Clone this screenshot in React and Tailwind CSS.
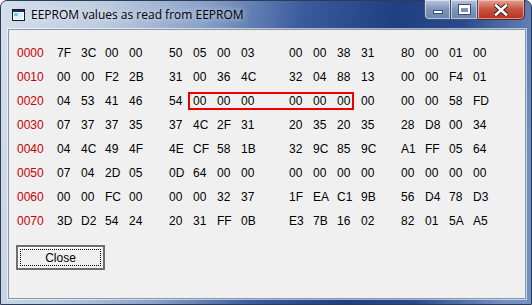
import React from 'react';

const rows = [
    ['0000', ['7F', '3C', '00', '00'], ['50', '05', '00', '03'], ['00', '00', '38', '31'], ['80', '00', '01', '00']],
    ['0010', ['00', '00', 'F2', '2B'], ['31', '00', '36', '4C'], ['32', '04', '88', '13'], ['00', '00', 'F4', '01']],
    ['0020', ['04', '53', '41', '46'], ['54', '00', '00', '00'], ['00', '00', '00', '00'], ['00', '00', '58', 'FD']],
    ['0030', ['07', '37', '37', '35'], ['37', '4C', '2F', '31'], ['20', '35', '20', '35'], ['28', 'D8', '00', '34']],
    ['0040', ['04', '4C', '49', '4F'], ['4E', 'CF', '58', '1B'], ['32', '9C', '85', '9C'], ['A1', 'FF', '05', '64']],
    ['0050', ['07', '04', '2D', '05'], ['0D', '64', '00', '00'], ['00', '00', '00', '00'], ['00', '00', '00', '00']],
    ['0060', ['00', '00', 'FC', '00'], ['00', '00', '32', '37'], ['1F', 'EA', 'C1', '9B'], ['56', 'D4', '78', 'D3']],
    ['0070', ['3D', 'D2', '54', '24'], ['20', '31', 'FF', '0B'], ['E3', '7B', '16', '02'], ['82', '01', '5A', 'A5']],
];

function Group({ bytes, className }) {
    return (
        <div className={`flex ${className}`}>
            {bytes.map((b, i) => (
                <span key={i} className="w-[24px]">{b}</span>
            ))}
        </div>
    );
}

function TitleButtons() {
    return (
        <div className="flex h-[20px] mt-[-1px]">
            <div className="w-[27px] flex items-center justify-center rounded-bl-[5px] border border-t-0 border-[#3b4f73] bg-gradient-to-b from-[#b8c6dd] via-[#7d93b9] to-[#6c86b3] shadow-[inset_0_0_0_1px_rgba(255,255,255,0.5)]">
                <div className="w-[10px] h-[4px] mt-[5px] bg-white border border-[#3d4f70]" />
            </div>
            <div className="w-[27px] flex items-center justify-center border border-l-0 border-t-0 border-[#3b4f73] bg-gradient-to-b from-[#b8c6dd] via-[#7d93b9] to-[#6c86b3] shadow-[inset_0_0_0_1px_rgba(255,255,255,0.5)]">
                <div className="w-[11px] h-[9px] border-[2px] border-t-[3px] border-white outline outline-1 outline-[#3d4f70]" />
            </div>
            <div className="w-[47px] flex items-center justify-center rounded-br-[5px] border border-l-0 border-t-0 border-[#4a2a2a] bg-gradient-to-b from-[#e3a394] via-[#c8503e] to-[#b8301e] shadow-[inset_0_0_0_1px_rgba(255,210,200,0.6)]">
                <svg width="14" height="12" viewBox="0 0 14 12">
                    <path d="M2 1.5 L12 10.5 M12 1.5 L2 10.5" stroke="#3a2020" strokeWidth="4.5" strokeLinecap="square" />
                    <path d="M2 1.5 L12 10.5 M12 1.5 L2 10.5" stroke="#ffffff" strokeWidth="2.6" strokeLinecap="square" />
                </svg>
            </div>
        </div>
    );
}

export default function App() {
    return (
        <div className="w-[532px] h-[305px] bg-white">
            <div className="w-[532px] h-[305px] rounded-t-[7px] border border-[#2c3c58] bg-[linear-gradient(100deg,#d5dfec_0%,#bccbe0_18%,#8aa2c8_35%,#3b5c9c_52%,#1f3f80_68%,#2a4a8c_80%,#7390c2_95%)] flex flex-col">
                {/* Title bar */}
                <div className="h-[28px] flex items-start">
                    <div className="flex items-center h-[28px] pl-[11px]">
                        <svg width="13" height="12" viewBox="0 0 13 12">
                            <rect x="0.5" y="0.5" width="12" height="11" fill="#ffffff" stroke="#1a1a1a" />
                            <rect x="1" y="1" width="11" height="2" fill="#1a2a6a" />
                            <rect x="2" y="4" width="9" height="6" fill="#dff3ff" />
                            <rect x="2" y="4" width="4" height="3" fill="#6fd0f0" />
                        </svg>
                        <span className="ml-[6px] text-[12px] text-black [font-family:'Open_Sans',sans-serif] [text-shadow:0_0_6px_rgba(255,255,255,0.9)]">
                            EEPROM values as read from EEPROM
                        </span>
                    </div>
                    <div className="ml-auto mr-[6px]">
                        <TitleButtons />
                    </div>
                </div>

                {/* Client area */}
                <div className="ml-[7px] w-[518px] h-[270px] border border-[#8a97aa] bg-[#f0f0f0] shadow-[0_0_0_1px_rgba(255,255,255,0.6)]">
                    <div className="relative pt-[11px] text-[12px] text-black [font-family:'Liberation_Sans',Arial,sans-serif]">
                        {rows.map(([addr, g1, g2, g3, g4]) => (
                            <div key={addr} className="flex h-[24px] items-center pl-[8px]">
                                <span className="w-[40px] text-[#c80000]">{addr}</span>
                                <Group bytes={g1} />
                                <Group bytes={g2} className="ml-[16px]" />
                                <Group bytes={g3} className="ml-[24px]" />
                                <Group bytes={g4} className="ml-[16px]" />
                            </div>
                        ))}
                        {/* highlighted run of zeros */}
                        <div className="absolute left-[179px] top-[62px] w-[166px] h-[18px] border-[2px] border-[#ee0000]" />

                        <div className="pl-[7px] pt-[12px]">
                            <button className="w-[89px] h-[25px] border-[2px] border-[#6e6e6e] bg-[#f0f0f0] p-[2px] shadow-[inset_1px_1px_0_#ffffff]">
                                <div className="w-full h-full border border-dotted border-black flex items-center justify-center text-[12px]">
                                    Close
                                </div>
                            </button>
                        </div>
                    </div>
                </div>
            </div>
        </div>
    );
}
